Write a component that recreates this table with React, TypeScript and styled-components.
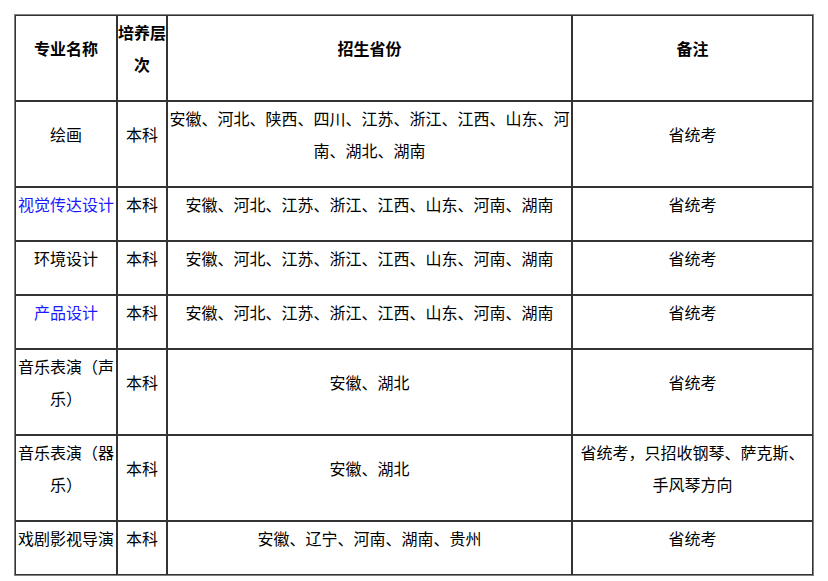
import React from "react";
import styled, { createGlobalStyle } from "styled-components";

const GlobalStyle = createGlobalStyle`
  html, body {
    margin: 0;
    padding: 0;
    background: #ffffff;
  }
  body {
    font-family: "Noto Sans CJK SC", "Microsoft YaHei", sans-serif;
    color: #000000;
  }
`;

const Page = styled.div`
  padding: 14px;
`;

const Table = styled.table`
  box-sizing: border-box;
  width: 800px;
  table-layout: fixed;
  border-collapse: separate;
  border-spacing: 0;
  border: 1px solid #808080;
  font-size: 16px;
  line-height: 32px;
`;

const Col = styled.col<{ $w: number }>`
  width: ${(p) => p.$w}px;
`;

const HeadCell = styled.th`
  box-sizing: border-box;
  border: 1px solid #333333;
  padding: 0 0 20px;
  font-weight: bold;
  text-align: center;
  vertical-align: middle;
`;

const Cell = styled.td<{ $link?: boolean }>`
  box-sizing: border-box;
  border: 1px solid #333333;
  padding: 0 0 20px;
  text-align: center;
  vertical-align: middle;
  color: ${(p) => (p.$link ? "#1a1aff" : "#000000")};
  word-break: break-all;
`;

type Row = {
  name: string;
  link?: boolean;
  level: string;
  provinces: string;
  note: string;
};

const rows: Row[] = [
  {
    name: "绘画",
    level: "本科",
    provinces: "安徽、河北、陕西、四川、江苏、浙江、江西、山东、河南、湖北、湖南",
    note: "省统考",
  },
  {
    name: "视觉传达设计",
    link: true,
    level: "本科",
    provinces: "安徽、河北、江苏、浙江、江西、山东、河南、湖南",
    note: "省统考",
  },
  {
    name: "环境设计",
    level: "本科",
    provinces: "安徽、河北、江苏、浙江、江西、山东、河南、湖南",
    note: "省统考",
  },
  {
    name: "产品设计",
    link: true,
    level: "本科",
    provinces: "安徽、河北、江苏、浙江、江西、山东、河南、湖南",
    note: "省统考",
  },
  {
    name: "音乐表演（声乐）",
    level: "本科",
    provinces: "安徽、湖北",
    note: "省统考",
  },
  {
    name: "音乐表演（器乐）",
    level: "本科",
    provinces: "安徽、湖北",
    note: "省统考，只招收钢琴、萨克斯、手风琴方向",
  },
  {
    name: "戏剧影视导演",
    level: "本科",
    provinces: "安徽、辽宁、河南、湖南、贵州",
    note: "省统考",
  },
];

export default function App() {
  return (
    <Page>
      <GlobalStyle />
      <Table>
        <colgroup>
          <Col $w={102} />
          <Col $w={50} />
          <Col $w={405} />
          <Col $w={241} />
        </colgroup>
        <thead>
          <tr>
            <HeadCell>专业名称</HeadCell>
            <HeadCell>培养层次</HeadCell>
            <HeadCell>招生省份</HeadCell>
            <HeadCell>备注</HeadCell>
          </tr>
        </thead>
        <tbody>
          {rows.map((r) => (
            <tr key={r.name}>
              <Cell $link={r.link}>{r.name}</Cell>
              <Cell>{r.level}</Cell>
              <Cell>{r.provinces}</Cell>
              <Cell>{r.note}</Cell>
            </tr>
          ))}
        </tbody>
      </Table>
    </Page>
  );
}
